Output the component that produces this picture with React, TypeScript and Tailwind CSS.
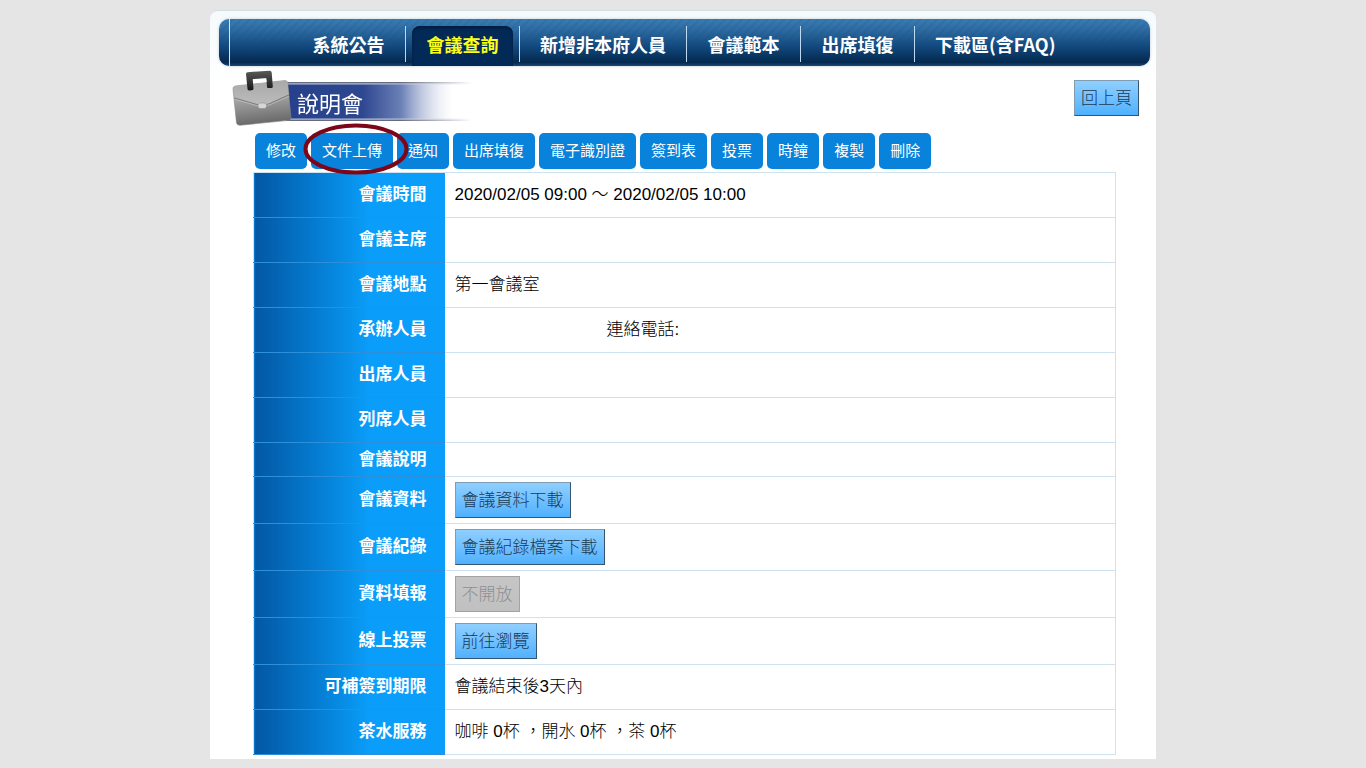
import type { ReactNode } from "react";

type NavItem = { label: string; active?: boolean };

const navItems: NavItem[] = [
  { label: "系統公告" },
  { label: "會議查詢", active: true },
  { label: "新增非本府人員" },
  { label: "會議範本" },
  { label: "出席填復" },
  { label: "下載區(含FAQ)" },
];

const actions: string[] = [
  "修改",
  "文件上傳",
  "通知",
  "出席填復",
  "電子識別證",
  "簽到表",
  "投票",
  "時鐘",
  "複製",
  "刪除",
];

function PushButton({ children, disabled }: { children: ReactNode; disabled?: boolean }) {
  return (
    <button
      type="button"
      disabled={disabled}
      className="block h-9 border border-t-[#7f9cb3] border-l-[#7f9cb3] border-r-[#34566f] border-b-[#34566f] bg-linear-to-b from-[#8fcfff] to-[#4fb1ff] px-1.5 pt-0.5 text-[17px] leading-6 font-light text-[#1c3a54] disabled:border-[#a3a3a3] disabled:from-[#c6c6c6] disabled:to-[#c0c0c0] disabled:text-[#8f8f8f]"
    >
      {children}
    </button>
  );
}

function Briefcase() {
  return (
    <svg viewBox="0 0 60 56" className="z-10 h-14 w-[60px] shrink-0" aria-hidden="true">
      <defs>
        <linearGradient id="caseBody" x1="0" y1="0" x2="0.15" y2="1">
          <stop offset="0" stopColor="#c9c9c9" />
          <stop offset="0.45" stopColor="#a3a3a3" />
          <stop offset="1" stopColor="#6a6a6a" />
        </linearGradient>
        <linearGradient id="caseFlap" x1="0" y1="0" x2="0" y2="1">
          <stop offset="0" stopColor="#a9a9a9" />
          <stop offset="1" stopColor="#bcbcbc" />
        </linearGradient>
        <linearGradient id="caseHandle" x1="0" y1="0" x2="0" y2="1">
          <stop offset="0" stopColor="#5a5a5a" />
          <stop offset="1" stopColor="#161616" />
        </linearGradient>
      </defs>
      <path d="M3 16 L53 10.5 Q55.500 10.5 55.800 13 L59 48 Q59 50 57 50.300 L8 55.300 Q5 55.300 4.500 53 L1 19 Q1 16.500 3 16Z" fill="url(#caseBody)" stroke="#858585" strokeWidth="0.6" />
      <path d="M1.500 18 Q2 16.500 4 16.300 L53 11 Q55.300 11 55.600 14 L56.800 25 L38 33.500 Q31 36 25 34.500 L2.500 28Z" fill="url(#caseFlap)" />
      <path d="M2.500 28 L25 34.500 Q31 36 38 33.500 L56.800 25" fill="none" stroke="#7c7c7c" strokeWidth="1.100" />
      <path d="M2.700 29.200 L25 35.700 Q31 37.200 38 34.700 L57 26.200" fill="none" stroke="#c6c6c6" strokeWidth="0.700" />
      <path d="M15.500 19 L14 4 Q14 2.300 15.600 2.200 L37.500 0.700 Q39.500 0.600 39.700 2.400 L40.800 16.500 Q40.800 18 39.300 18 L36 18 Q35 18 35 16.800 L34.300 8.300 L20.700 9.200 L21.500 18.500 Q21.500 20 20 20.200 L17 20.400 Q15.600 20.400 15.500 19Z" fill="url(#caseHandle)" />
      <path d="M21 9.300 L34 8.400 L34.600 12 L21.300 13Z" fill="#ffffff" />
      <rect x="26" y="33" width="8.500" height="5.500" rx="2.200" fill="#d6d6d6" stroke="#8d8d8d" strokeWidth="0.600" />
    </svg>
  );
}

function SiteNav() {
  return (
    <nav className="mr-1.5 ml-[9px] flex h-[47px] rounded-[10px] bg-[#3a7db4] bg-[linear-gradient(180deg,rgba(10,60,110,0.1)_0%,rgba(10,60,110,0.3)_20%,#12477c_60%,#04294f_92%,#1c4674_100%),repeating-linear-gradient(135deg,#3f84bb_0px,#3f84bb_2px,#387bb2_4px,#3f84bb_6px)] font-['Noto_Sans_CJK_TC',sans-serif] shadow-[0_0_3px_#b9c8d3]">
      <div className="mr-[62px] ml-2.5 border-l border-[#d5e6f5]" />
      <ul className="flex py-[7px]">
        {navItems.map((item, index) => (
          <li
            key={item.label}
            className={
              index < navItems.length - 1
                ? "flex h-9 min-w-[114px] border-r border-[#bdd9f2]"
                : "flex h-9 min-w-[114px]"
            }
          >
            <a
              href="#"
              aria-current={item.active ? "page" : undefined}
              className={
                item.active
                  ? "mx-1.5 flex h-10 grow items-center justify-center rounded-t-lg bg-[#032a57] pb-1 text-lg leading-6 font-bold text-[#fbff1a] shadow-[inset_0_2px_3px_#011c3d]"
                  : "flex h-9 grow items-center justify-center px-5 text-lg leading-6 font-bold text-white"
              }
            >
              {item.label}
            </a>
          </li>
        ))}
      </ul>
    </nav>
  );
}

function ActionBar() {
  return (
    <div className="mr-11 ml-[45px] mt-[7px] flex gap-1">
      {actions.map((label) => (
        <button
          key={label}
          type="button"
          className="relative h-9 rounded-[5px] bg-[#0882da] px-[11px] text-[15px] leading-5 whitespace-nowrap text-white"
        >
          {label}
          {label === "文件上傳" && (
            <svg
              viewBox="0 0 106 52"
              className="pointer-events-none absolute -top-2.5 -left-2 z-10 h-[52px] w-[106px] max-w-none"
              aria-hidden="true"
            >
              <ellipse cx="53" cy="26" rx="50.500" ry="23.500" fill="none" stroke="#7d0718" strokeWidth="4" />
            </svg>
          )}
        </button>
      ))}
    </div>
  );
}

type Row = { label: string; size: "normal" | "short" | "tall"; content?: ReactNode };

const rows: Row[] = [
  { label: "會議時間", size: "normal", content: "2020/02/05 09:00 ～ 2020/02/05 10:00" },
  { label: "會議主席", size: "normal" },
  { label: "會議地點", size: "normal", content: "第一會議室" },
  { label: "承辦人員", size: "normal", content: <span className="ml-38">連絡電話:</span> },
  { label: "出席人員", size: "normal" },
  { label: "列席人員", size: "normal" },
  { label: "會議說明", size: "short" },
  { label: "會議資料", size: "tall", content: <PushButton>會議資料下載</PushButton> },
  { label: "會議紀錄", size: "tall", content: <PushButton>會議紀錄檔案下載</PushButton> },
  { label: "資料填報", size: "tall", content: <PushButton disabled>不開放</PushButton> },
  { label: "線上投票", size: "tall", content: <PushButton>前往瀏覽</PushButton> },
  { label: "可補簽到期限", size: "normal", content: "會議結束後3天內" },
  { label: "茶水服務", size: "normal", content: "咖啡 0杯 ，開水 0杯 ，茶 0杯" },
];

const rowHeights = { normal: "h-[45px]", short: "h-[34px]", tall: "h-[47px]" };

function MeetingTable() {
  return (
    <div className="mt-[3px] mr-10 ml-[43px]">
      <table className="w-full border-collapse border border-[#cfe2ef] text-[17px] leading-6">
        <tbody>
          {rows.map((row) => (
            <tr key={row.label} className={rowHeights[row.size]}>
              <th
                scope="row"
                className="w-[191px] border-b border-[#2b8fdc] bg-linear-to-r from-[#0357a4] to-[#0a9df9] to-60% p-0 pr-[18px] text-right font-bold text-white"
              >
                {row.label}
              </th>
              <td className="border-b border-[#cfe2ef] p-0 pl-2.5 font-light text-black">{row.content}</td>
            </tr>
          ))}
        </tbody>
      </table>
    </div>
  );
}

export default function App() {
  return (
    <div
      lang="zh-Hant"
      className="min-h-screen bg-[#e5e5e5] pt-2.5 pb-2 font-['Liberation_Sans','Noto_Sans_CJK_TC',sans-serif]"
    >
      <main className="mx-auto max-w-[946px] rounded-t-lg border-t border-[#d3dde2] bg-white bg-linear-to-b from-[#f5fafc] to-white to-10% pt-2 pb-1">
        <SiteNav />
        <header className="mt-1 flex items-start pr-[17px] pl-[22px]">
          <Briefcase />
          <h1 className="mt-3 -ml-1.5 h-[39px] w-[190px] bg-[linear-gradient(180deg,#4a5062_0px,#b9c0d2_2px,transparent_3px,transparent_36px,#b9c0d2_37px,#4a5062_39px),linear-gradient(90deg,#26408c_0%,#2d4790_40%,#6f84b8_62%,#ffffff_88%)] pt-[9px] pl-[11px] text-[22px] leading-7 font-normal text-white [mask-image:linear-gradient(90deg,#000_60%,transparent_98%)]">
            說明會
          </h1>
          <div className="mt-2.5 ml-auto">
            <PushButton>回上頁</PushButton>
          </div>
        </header>
        <ActionBar />
        <MeetingTable />
      </main>
    </div>
  );
}
